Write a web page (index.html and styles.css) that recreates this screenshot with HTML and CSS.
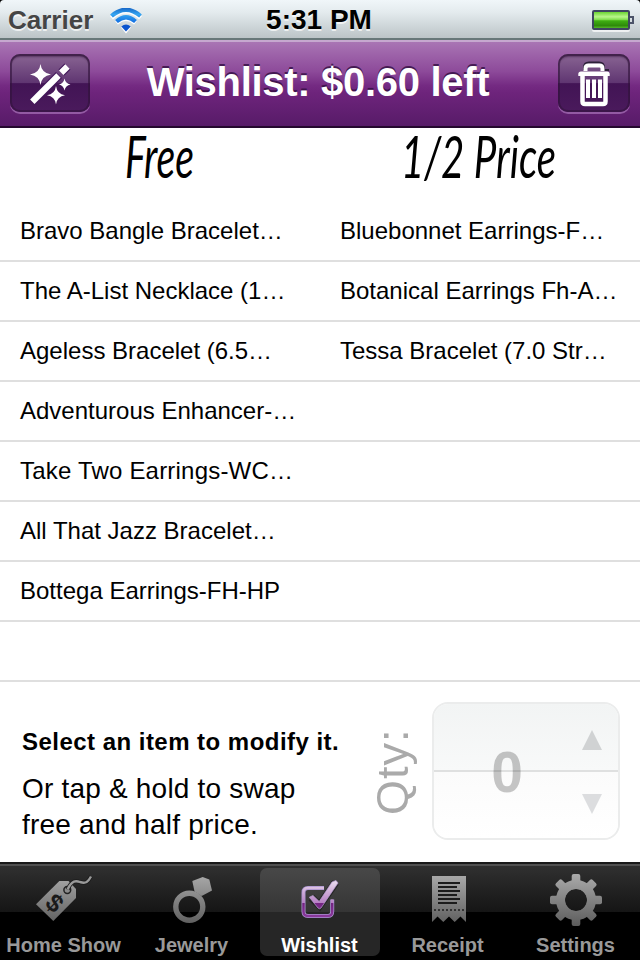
FILE: index.html
```html
<!DOCTYPE html>
<html lang="en">
<head>
<meta charset="utf-8">
<title>Wishlist</title>
<link rel="stylesheet" href="styles.css">
</head>
<body>
<div class="app">
  <header class="status">
    <div class="carrier"><span>Carrier</span>
      <svg class="wifi" width="34" height="26" viewBox="0 0 34 26">
        <defs><linearGradient id="wf" x1="0" y1="0" x2="0" y2="26" gradientUnits="userSpaceOnUse"><stop offset="0" stop-color="#1868c8"/><stop offset=".25" stop-color="#36a5f0"/><stop offset=".5" stop-color="#1878e4"/><stop offset="1" stop-color="#0848c8"/></linearGradient></defs>
        <g fill="none" stroke="#fff" stroke-width="4.4" transform="translate(0 1.3)"><path d="M2.5 8.5Q17-4.500 31.500 8.500M7.500 13.500Q17 5.500 26.500 13.500"/></g>
        <path d="M12 19.500Q17 15.500 22 19.500L17 25.500Z" fill="#fff"/>
        <g fill="none" stroke="url(#wf)" stroke-width="4.200"><path d="M2.500 8Q17-4.500 31.500 8M7.500 13.500Q17 5 26.500 13.500"/></g>
        <path d="M12.300 18.500Q17 14.500 21.700 18.500L17 23.500Z" fill="#0b55cf"/>
      </svg>
    </div>
    <div class="clock">5:31 PM</div>
    <div class="power"><div class="battery"></div><div class="battery-tip"></div></div>
  </header>

  <nav class="navbar">
    <button class="nav-btn" aria-label="Auto arrange">
      <svg width="80" height="60" viewBox="10 54 80 60" fill="#fff">
        <path d="M40.500 64Q41.500 73 51 74.500Q41.500 76 40.500 85Q39.500 76 30 74.500Q39.500 73 40.500 64Z"/>
        <path d="M64.500 78.500Q65.500 83.500 70.500 84.500Q65.500 85.500 64.500 90.500Q63.500 85.500 59 84.500Q63.500 83.500 64.500 78.500Z"/>
        <path d="M56 86Q57 94 65 95.300Q57 96.500 56 104.500Q55 96.500 47 95.300Q55 94 56 86Z"/>
        <path d="M32.500 101.500L59 75M61.500 72.500L67.500 66.500" stroke="#42185a" stroke-width="8.500"/>
        <path d="M32.300 101.700L58.500 75.500M61.200 72.800L67.500 66.500" stroke="#fff" stroke-width="6.200"/>
      </svg>
    </button>
    <h1>Wishlist: $0.60 left</h1>
    <button class="nav-btn trash" aria-label="Clear">
      <svg width="72" height="60" viewBox="558 54 72 60" fill="none">
        <path d="M584 70V67.500Q584 62.500 589 62.500H599Q604 62.500 604 67.500V70H609" stroke="#2c2038" stroke-width="2"/>
        <g stroke="#fff"><path d="M585.500 71V68.500Q585.500 65.500 588.500 65.500H599.500Q602.500 65.500 602.500 68.500V71" stroke-width="4"/>
        <path d="M578.300 76V74Q578.300 71.500 581 71.500H607Q609.700 71.500 609.700 74V76Z" fill="#fff" stroke="none"/>
        <path d="M582.500 75V101.500Q582.500 104 585 104H603Q605.500 104 605.500 101.500V75" stroke-width="4.500"/>
        <path d="M588 79.500V98M594 79.500V98M600 79.500V98" stroke-width="4"/></g>
      </svg>
    </button>
  </nav>

  <main>
    <div class="headings">
      <svg width="320" height="74" viewBox="0 0 320 74"><text x="125" y="50" textLength="69" lengthAdjust="spacingAndGlyphs">Free</text></svg>
      <svg width="320" height="74" viewBox="0 0 320 74"><text x="81" y="50" textLength="155" lengthAdjust="spacingAndGlyphs">1/2 Price</text></svg>
    </div>
    <div class="row"><span>Bravo Bangle Bracelet…</span><span>Bluebonnet Earrings-F…</span></div>
    <div class="row"><span>The A-List Necklace (1…</span><span>Botanical Earrings Fh-A…</span></div>
    <div class="row"><span>Ageless Bracelet (6.5…</span><span>Tessa Bracelet (7.0 Str…</span></div>
    <div class="row"><span>Adventurous Enhancer-…</span><span></span></div>
    <div class="row"><span class="loose">Take Two Earrings-WC…</span><span></span></div>
    <div class="row"><span>All That Jazz Bracelet…</span><span></span></div>
    <div class="row"><span>Bottega Earrings-FH-HP</span><span></span></div>
    <div class="row"><span></span><span></span></div>
  </main>

  <section class="editor">
    <div class="help">
      <strong>Select an item to modify it.</strong>
      <p>Or tap &amp; hold to swap<br>free and half price.</p>
    </div>
    <div class="qty">Qty:</div>
    <div class="stepper">
      <div class="half up"><svg width="20" height="20"><path d="M10 0L20 20H0Z" fill="#d0d2d3"/></svg></div>
      <div class="half down"><svg width="20" height="20"><path d="M10 20L20 0H0Z" fill="#dcdddf"/></svg></div>
      <div class="value">0</div>
    </div>
  </section>

  <footer class="tabs">
    <div class="tab">
      <svg width="120" height="62" viewBox="4 868 120 62">
        <defs><linearGradient id="gr" x1="0" y1="874" x2="0" y2="926" gradientUnits="userSpaceOnUse"><stop offset="0" stop-color="#aaa"/><stop offset="1" stop-color="#5c5c5c"/></linearGradient></defs>
        <path d="M36 904.300L59.300 881H68.500L76 889V898L53.300 921Z" fill="url(#gr)"/>
        <circle cx="67.300" cy="890" r="3.400" fill="#8c8c8c" stroke="#222" stroke-width="1.500"/>
        <path d="M67.500 889.500C72 880 76 880.500 80 882C86 884 88 882 91 876.500" fill="none" stroke="#1b1b1b" stroke-width="4"/>
        <path d="M67.500 889.500C72 880 76 880.500 80 882C86 884 88 882 91 876.500" fill="none" stroke="#999" stroke-width="2.400"/>
        <text class="dollar" transform="translate(54.300 903.500) rotate(42)" x="0" y="8" text-anchor="middle">$</text>
      </svg><span>Home Show</span>
    </div>
    <div class="tab">
      <svg width="120" height="62" viewBox="132 868 120 62">
        <circle cx="189.300" cy="906.700" r="13.500" fill="none" stroke="url(#gr)" stroke-width="5.400"/>
        <path d="M192.300 881L202.700 877L209.300 879.500L212 890.500L201.700 896L194.500 891.500Z" fill="url(#gr)"/>
      </svg><span>Jewelry</span>
    </div>
    <div class="tab active">
      <svg width="120" height="62" viewBox="260 868 120 62">
        <defs><linearGradient id="pu" x1="0" y1="880" x2="0" y2="918" gradientUnits="userSpaceOnUse"><stop offset="0" stop-color="#ece0f0"/><stop offset=".6" stop-color="#b77fc4"/><stop offset=".61" stop-color="#742482"/><stop offset="1" stop-color="#8c3a9c"/></linearGradient></defs>
        <path d="M324 888H308Q303.500 888 303.500 892.500V911.500Q303.500 916 308 916H328Q332.200 916 332.200 911.500V899.500" fill="none" stroke="#a993d0" stroke-width="4"/>
        <path d="M324 888H308Q303.500 888 303.500 892.500V911.500Q303.500 916 308 916H328Q332.200 916 332.200 911.500V899.500" fill="none" stroke="url(#pu)" stroke-width="2.400"/>
        <path d="M311.300 897.700L319.500 905.500L335.500 882.500" fill="none" stroke="#262626" stroke-width="8"/>
        <path d="M309.300 897.200L313 895.500L319.200 901.500L332 882L336 880.500L338 883L321 908Q319.500 909.500 318 908Z" fill="url(#pu)" stroke="#b99ed4" stroke-width=".7"/>
      </svg><span>Wishlist</span>
    </div>
    <div class="tab">
      <svg width="120" height="62" viewBox="388 868 120 62">
        <path d="M432 876H466V922L460.500 916.500L454.700 922L449 916.500L443.300 922L437.500 916.500L432 922Z" fill="url(#gr)"/>
        <path d="M438 883H460M438 887H457M438 891H460M438 895H457M438 899H460M438 903H457" stroke="#1c1c1c" stroke-width="2"/>
        <path d="M434 910H465" stroke="#333" stroke-width="2" stroke-dasharray="2 2"/>
      </svg><span>Receipt</span>
    </div>
    <div class="tab">
      <svg width="120" height="62" viewBox="516 868 120 62">
        <g fill="none" stroke="url(#gr)"><circle cx="576" cy="900" r="15.500" stroke-width="9"/></g>
        <mask id="teeth" maskUnits="userSpaceOnUse" x="540" y="868" width="72" height="62"><g fill="#fff">
          <rect x="571.700" y="874" width="8.600" height="52" rx="2"/><rect x="571.700" y="874" width="8.600" height="52" rx="2" transform="rotate(45 576 900)"/><rect x="571.700" y="874" width="8.600" height="52" rx="2" transform="rotate(90 576 900)"/><rect x="571.700" y="874" width="8.600" height="52" rx="2" transform="rotate(135 576 900)"/></g><circle cx="576" cy="900" r="11" fill="#000"/></mask>
        <rect x="548" y="872" width="56" height="56" fill="url(#gr)" mask="url(#teeth)"/>
      </svg><span>Settings</span>
    </div>
  </footer>
</div>
</body>
</html>
```
FILE: styles.css
```css
* { box-sizing: border-box; }
body { margin: 0; background: #000; }
.app {
  width: 640px; height: 960px; display: flex; flex-direction: column;
  background: #fff; color: #000; overflow: hidden;
  font-family: "Liberation Sans", Arial, sans-serif;
}
.status {
  height: 40px; flex: none; display: grid; grid-template-columns: 1fr auto 1fr; align-items: center;
  padding: 0 6px 0 8px; font-weight: bold; border-radius: 4px 4px 0 0;
  background: linear-gradient(#f0f6f9, #e4ebee 30%, #bcc4c7 95%, #687879 95%);
  text-shadow: 0 2px 0 rgba(255,255,255,.7);
}
.app { background: linear-gradient(#000 4px, #fff 4px); }
.carrier { display: flex; align-items: center; font-size: 26px; color: #454545; gap: 16px; }
.wifi { margin-top: 1px; }
.clock { font-size: 28px; margin-left: -4px; }
.power { display: flex; justify-content: flex-end; align-items: center; }
.battery {
  width: 38px; height: 20px; border: 2px solid #3f4660; border-radius: 2px;
  background: linear-gradient(#6bd432, #b9f58b 30%, #7fdc4b 48%, #3fae12 55%, #2e8a0a 85%, #54b62a);
  box-shadow: 0 2px 0 rgba(255,255,255,.7);
}
.battery-tip { width: 4px; height: 8px; border: 2px solid #4c5469; border-left: 0; }

.navbar {
  height: 88px; flex: none; display: flex; align-items: center; justify-content: space-between;
  padding: 0 10px 2px; border-top: 2px solid #c6a8cf; border-bottom: 2px solid #24082e;
  background: linear-gradient(#a975b4, #8d4a9a 35%, #742a82 52%, #6e247c 60%, #571b68);
}
.navbar h1 { margin: -3px 0 0 -12px; font-size: 40px; line-height: 48px; letter-spacing: -.3px; color: #fff; text-shadow: 0 -2px 0 rgba(45,10,60,.75); white-space: nowrap; }
.nav-btn {
  width: 80px; height: 58px; padding: 0; border: 0; border-radius: 10px; overflow: hidden;
  background: linear-gradient(#8a6694, #5f3571 50%, #421455 51%, #4a1a5c);
  box-shadow: inset 0 0 0 2px rgba(50,20,60,.6), inset 0 3px 2px rgba(30,5,40,.45), 0 2px 0 rgba(190,140,205,.55);
}
.nav-btn svg { display: block; }
.trash { width: 72px; }

.headings { display: flex; height: 74px; }
.headings svg { overflow: visible; }
.headings text { font: italic 400 58px Lato, sans-serif; fill: #000; }
.row { height: 60px; display: grid; grid-template-columns: 1fr 1fr; align-items: center; border-bottom: 2px solid #dfdfdf; font-size: 24px; white-space: nowrap; }
.row span { padding-left: 20px; }
.row .loose { letter-spacing: .2px; }

.editor { flex: 1; display: flex; align-items: flex-start; padding: 20px 20px 0 22px; }
.help { width: 345px; padding-top: 26px; }
.help strong { display: block; font-size: 24px; line-height: 28px; letter-spacing: .47px; white-space: nowrap; }
.help p { margin: 15px 0 0; font-size: 28px; line-height: 36px; letter-spacing: .2px; white-space: nowrap; }
.qty { width: 52px; height: 88px; margin-top: 25px; margin-right: 13px; font-size: 45px; line-height: 52px; letter-spacing: 1px; color: #aaa; writing-mode: vertical-rl; transform: rotate(180deg); white-space: nowrap; }
.stepper { position: relative; width: 188px; height: 138px; border: 2px solid #ebecec; border-radius: 16px; overflow: hidden; display: flex; flex-direction: column; }
.half { flex: none; display: flex; justify-content: flex-end; padding-right: 16px; }
.up { height: 68px; padding-top: 26px; background: linear-gradient(#f2f4f4, #f8f9f9); border-bottom: 2px solid #dfe0e0; }
.down { height: 66px; padding-top: 22px; background: linear-gradient(#fbfbfb, #fff); }
.value { position: absolute; left: 0; top: 36px; width: 146px; text-align: center; font-size: 57px; line-height: 64px; font-weight: bold; color: rgba(0,0,0,.22); }

.tabs {
  height: 98px; flex: none; display: flex; justify-content: space-around; align-items: flex-start; padding-top: 4px;
  border-top: 2px solid #1a1a1a;
  background: linear-gradient(#505050 0 2px, #303030 2px, #151515 48px, #000 48px);
}
.tab { width: 120px; height: 88px; border-radius: 7px; text-align: center; color: #999; }
.tab svg { display: block; }
.tab span { display: block; margin: 4px 1px 0 0; font-size: 20px; line-height: 22px; font-weight: bold; white-space: nowrap; }
.active { color: #fff; background: linear-gradient(#484848, #353535 50%, #262626 50%); }
.dollar { font: bold 25px "Liberation Sans", sans-serif; fill: #1a1a1a; }
```
